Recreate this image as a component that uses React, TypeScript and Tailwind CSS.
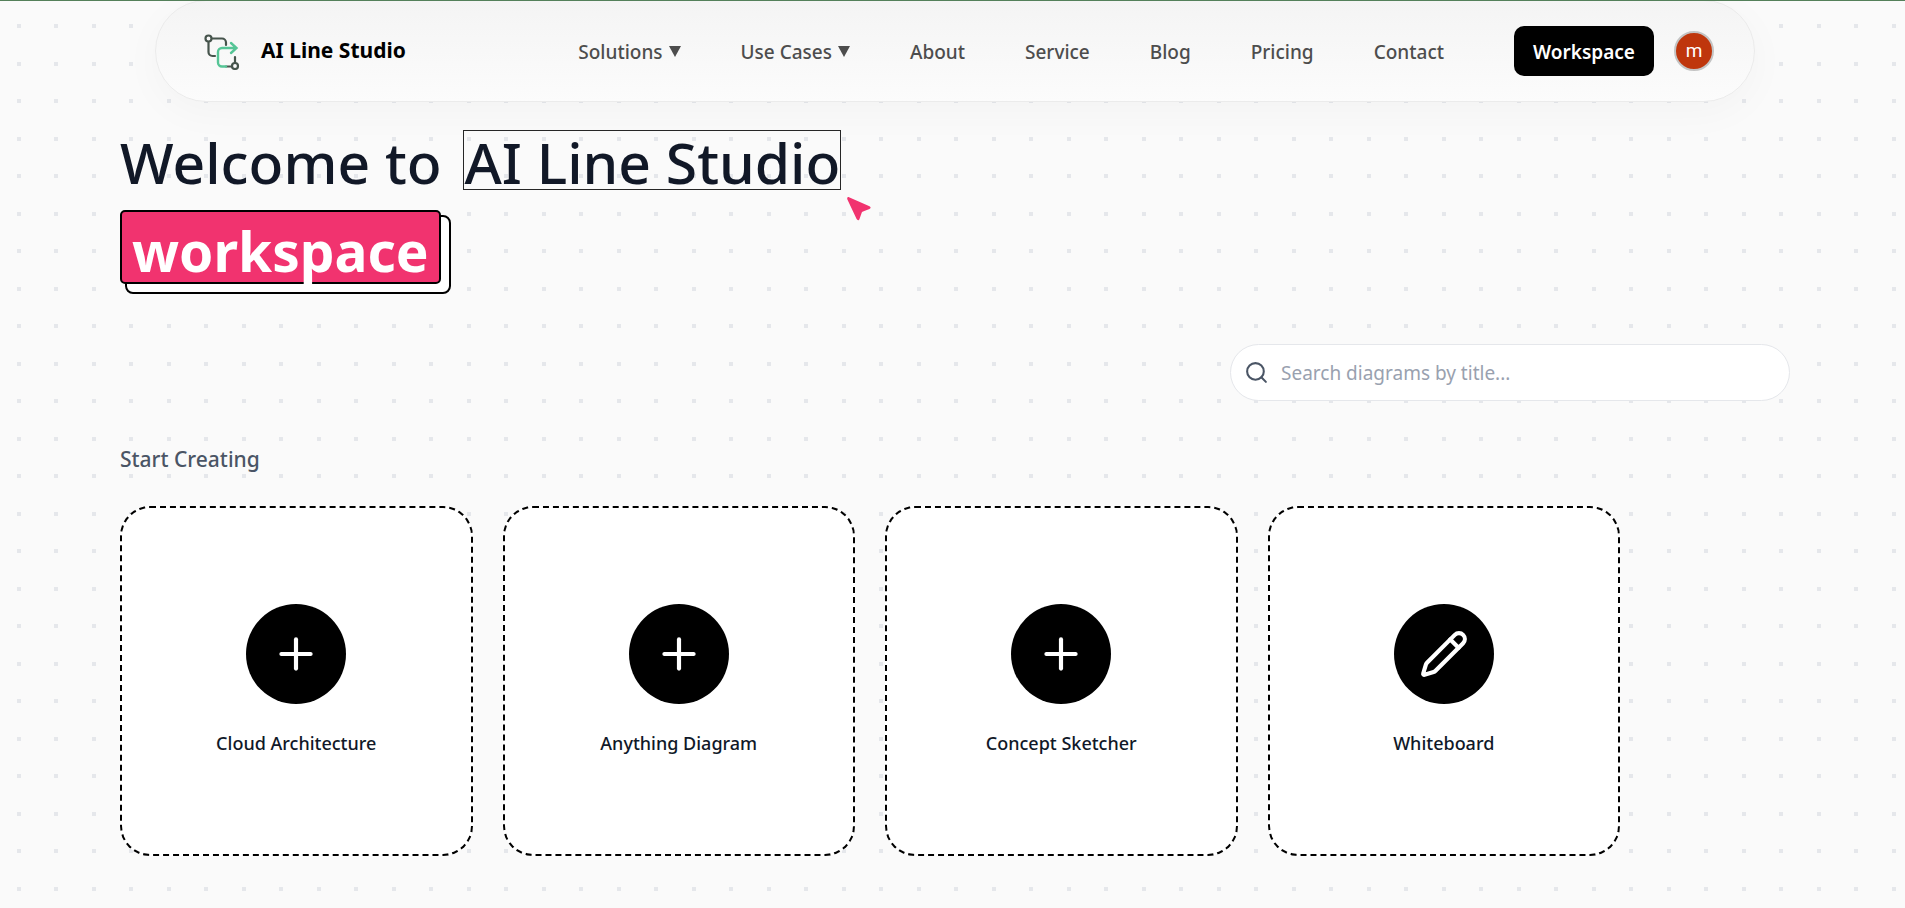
import { Pencil, Plus, Search } from "lucide-react";

const navLinks = [
  { label: "Solutions", dropdown: true },
  { label: "Use Cases", dropdown: true },
  { label: "About" },
  { label: "Service" },
  { label: "Blog" },
  { label: "Pricing" },
  { label: "Contact" },
];

const cards = [
  { title: "Cloud Architecture", icon: "plus" },
  { title: "Anything Diagram", icon: "plus" },
  { title: "Concept Sketcher", icon: "plus" },
  { title: "Whiteboard", icon: "pencil" },
];

const DotGrid = () => (
  <svg className="absolute inset-0 -z-10 h-full w-full" aria-hidden="true">
    <defs>
      <pattern id="dots" width="75" height="75" patternUnits="userSpaceOnUse">
        <path
          d="M17 24h4v4h-4zM54 24h4v4h-4zM17 62h4v4h-4zM54 62h4v4h-4z"
          fill="#e5e7eb"
        />
      </pattern>
    </defs>
    <rect width="100%" height="100%" fill="url(#dots)" />
  </svg>
);

const Logo = () => (
  <svg
    className="mt-0.5 h-9 w-9"
    viewBox="0 0 36 36"
    fill="none"
    strokeWidth="2.200"
    strokeLinecap="round"
    aria-hidden="true"
  >
    <g stroke="#46544c">
      <circle cx="4.5" cy="4.5" r="3" />
      <path d="M8 4.5h10a4 4 0 0 1 4 4v2.500M4.500 8v10a4 4 0 0 0 4 4h2.500" />
      <circle cx="31" cy="32" r="3" />
      <path d="M31 23v5.500M22 32.500h5.500" />
    </g>
    <path
      d="M22 32.500h-4a4 4 0 0 1-4-4v-10.500a4 4 0 0 1 4-4h14M27 9l5.500 5-5.500 5"
      stroke="#56c596"
      strokeWidth="2.400"
    />
  </svg>
);

const Header = () => (
  <header className="mx-auto flex h-[102px] max-w-[1600px] items-center rounded-[51px] border border-[#ebebeb] bg-gradient-to-b from-[#f4f4f4] to-[#fcfcfc] pr-10 pl-12 shadow-[0_10px_40px_rgba(0,0,0,0.03)]">
    <a
      href="#"
      className="flex items-center gap-[21px] text-[21px] font-bold text-black"
    >
      <Logo />
      AI Line Studio
    </a>
    <nav className="ml-auto flex items-center gap-[60px] pt-0.5 text-[19px] font-medium text-[#4d4d4d]">
      {navLinks.map((link) =>
        link.dropdown ? (
          <button key={link.label} className="flex items-center gap-1.5">
            {link.label}
            <svg width="12" height="12" viewBox="0 0 12 12" aria-hidden="true">
              <path d="M0 0h12L6 11z" fill="currentColor" />
            </svg>
          </button>
        ) : (
          <a key={link.label} href="#">
            {link.label}
          </a>
        ),
      )}
    </nav>
    <button className="ml-[70px] h-[50px] w-[140px] rounded-[10px] bg-black pt-0.5 text-[19px] font-semibold text-white">
      Workspace
    </button>
    <button
      className="ml-5 h-10 w-10 rounded-full border-2 border-[#c4c4c4] bg-[#bf360c] pb-0.5 font-[Roboto] text-[19px] leading-none text-white"
      aria-label="Account"
    >
      m
    </button>
  </header>
);

const Hero = () => (
  <h1 className="text-[57px] leading-[60px] font-medium text-[#111827]">
    <span className="flex items-start">
      <span className="mr-[7px] leading-[64px] whitespace-pre">
        Welcome to{" "}
      </span>
      <span className="relative h-[60px] border border-[#262626]">
        <span className="block leading-[62px]">AI Line Studio</span>
        <svg
          className="absolute top-[66px] left-full ml-[7px] h-6 w-6"
          viewBox="0 0 24 24"
          fill="#f1336f"
          aria-hidden="true"
        >
          <path d="M2 .2 22.500 9.200c1.500.7 1.500 2.100 0 2.700l-6.500 2.600c-.8.300-1 .6-1.300 1.300l-2.200 6.200c-.5 1.600-2.200 1.600-2.900.1L.4 2.500C-.2 1 .6-.3 2 .2z" />
        </svg>
      </span>
    </span>
    <span className="relative mt-4 block w-fit">
      <span className="absolute top-[5px] -right-2.5 -bottom-2.5 left-[5px] rounded-lg border-2 border-black bg-white" />
      <span className="relative block h-[74px] rounded-[5px] border-2 border-black bg-[#f1336f] px-2.5 text-[55px] leading-[78px] font-bold text-white">
        workspace
      </span>
    </span>
  </h1>
);

const SearchBox = () => (
  <label className="ml-auto flex h-[57px] w-full max-w-[560px] items-center gap-3 rounded-full border border-gray-200 bg-white px-[13px]">
    <Search className="h-[25px] w-[25px] text-gray-600" />
    <input
      type="text"
      aria-label="Search diagrams"
      placeholder="Search diagrams by title..."
      className="min-w-0 flex-1 bg-transparent pt-0.5 text-[19px] outline-none placeholder:text-gray-400"
    />
  </label>
);

const App = () => {
  return (
    <div className="relative isolate min-h-screen overflow-hidden bg-[#fafafa] pl-[5px] font-['Noto_Sans','Open_Sans',sans-serif]">
      <DotGrid />
      <Header />
      <div className="absolute inset-x-0 top-0 h-px bg-[#54805a]" />
      <main className="px-[115px] pt-7 pb-[52px]">
        <Hero />
        <div className="mt-[60px]">
          <SearchBox />
        </div>
        <h2 className="mt-[43px] text-[21px] leading-[30px] font-medium text-gray-600">
          Start Creating
        </h2>
        <div className="mt-8 grid max-w-[1500px] grid-cols-4 gap-[30px]">
          {cards.map((card) => (
            <button
              key={card.title}
              className="flex h-[350px] flex-col items-center justify-center gap-[25px] rounded-[30px] border-2 border-dashed border-black bg-white pb-0.5"
            >
              <span className="flex h-[100px] w-[100px] items-center justify-center rounded-full bg-black text-white">
                {card.icon === "plus" ? (
                  <Plus className="h-[50px] w-[50px]" />
                ) : (
                  <Pencil className="h-[50px] w-[50px]" />
                )}
              </span>
              <span className="text-lg leading-7 font-medium text-gray-900">
                {card.title}
              </span>
            </button>
          ))}
        </div>
      </main>
    </div>
  );
};

export default App;
